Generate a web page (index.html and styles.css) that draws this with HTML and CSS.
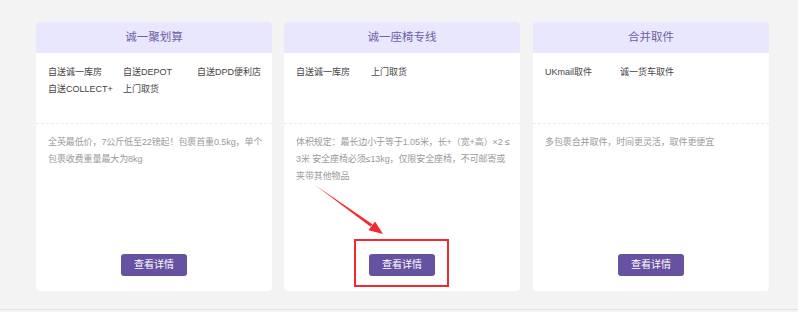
FILE: index.html
```html
<!DOCTYPE html>
<html lang="zh-CN">
<head>
    <meta charset="UTF-8">
    <meta name="viewport" content="width=device-width, initial-scale=1.0">
    <title>服务类型</title>
    <link rel="stylesheet" href="styles.css">
</head>
<body>
    <div class="page">
        <div class="services">
            <div class="card">
                <div class="card-title">诚一聚划算</div>
                <div class="features">
                    <span>自送诚一库房</span>
                    <span>自送DEPOT</span>
                    <span>自送DPD便利店</span>
                    <span>自送COLLECT+</span>
                    <span>上门取货</span>
                </div>
                <p class="desc">全英最低价，7公斤低至22镑起！包裹首重0.5kg，单个<br>包裹收费重量最大为8kg</p>
                <div class="actions"><a class="btn" href="#">查看详情</a></div>
            </div>
            <div class="card">
                <div class="card-title">诚一座椅专线</div>
                <div class="features">
                    <span>自送诚一库房</span>
                    <span>上门取货</span>
                </div>
                <p class="desc">体积规定：最长边小于等于1.05米，长+（宽+高）×2 ≤<br>3米 安全座椅必须≤13kg，仅限安全座椅，不可邮寄或<br>夹带其他物品</p>
                <div class="actions"><a class="btn" href="#">查看详情</a></div>
            </div>
            <div class="card">
                <div class="card-title">合并取件</div>
                <div class="features">
                    <span>UKmail取件</span>
                    <span>诚一货车取件</span>
                </div>
                <p class="desc">多包裹合并取件，时间更灵活，取件更便宜</p>
                <div class="actions"><a class="btn" href="#">查看详情</a></div>
            </div>
        </div>

        <!-- annotation -->
        <div class="highlight"></div>
        <svg class="arrow" width="798" height="312" viewBox="0 0 798 312">
            <polygon points="315,185 372.4,224.2 370.6,226.8" fill="#f02a2e"/>
            <polygon points="383,234 368.5,230.2 375,221.4" fill="#f02a2e"/>
        </svg>
    </div>
</body>
</html>
```

FILE: styles.css
```css
body {
    margin: 0;
    background: #f3f3f3;
    font-family: "Liberation Sans", "Noto Sans CJK SC", sans-serif;
}
.page {
    position: relative;
    height: 310px;
    border-bottom: 1px solid #e4e4e4;
    padding: 22px 0 0 36px;
    box-sizing: border-box;
}
.services {
    display: flex;
    gap: 12px;
}
.card {
    width: 236px;
    height: 269px;
    background: #fff;
    border-radius: 4px;
    display: flex;
    flex-direction: column;
    overflow: hidden;
}
.card:last-child {
    margin-left: 1px;
}
.card-title {
    height: 31px;
    line-height: 31px;
    background: #e9e7fd;
    color: #6e5fa6;
    text-align: center;
    font-size: 11.5px;
}
.features {
    height: 71px;
    box-sizing: border-box;
    padding: 11px 12px 0;
    display: grid;
    grid-template-columns: 75px 74px 74px;
    grid-auto-rows: 17px;
    align-content: start;
    font-size: 9px;
    line-height: 17px;
    color: #444;
    border-bottom: 1px dashed #ebebeb;
    white-space: nowrap;
}
.desc {
    margin: 0;
    padding: 10px 0 0 12px;
    font-size: 9px;
    line-height: 17px;
    color: #9a9a9a;
    white-space: nowrap;
    letter-spacing: -0.1px;
}
.actions {
    margin-top: auto;
    padding-bottom: 15px;
    text-align: center;
}
.btn {
    display: inline-block;
    width: 66px;
    height: 22px;
    line-height: 22px;
    background: #6652a1;
    color: #fff;
    border-radius: 3px;
    font-size: 10px;
    text-decoration: none;
}
.highlight {
    position: absolute;
    left: 354px;
    top: 239px;
    width: 91px;
    height: 44px;
    border: 2px solid #f02a2e;
}
.arrow {
    position: absolute;
    left: 0;
    top: 0;
}
```
